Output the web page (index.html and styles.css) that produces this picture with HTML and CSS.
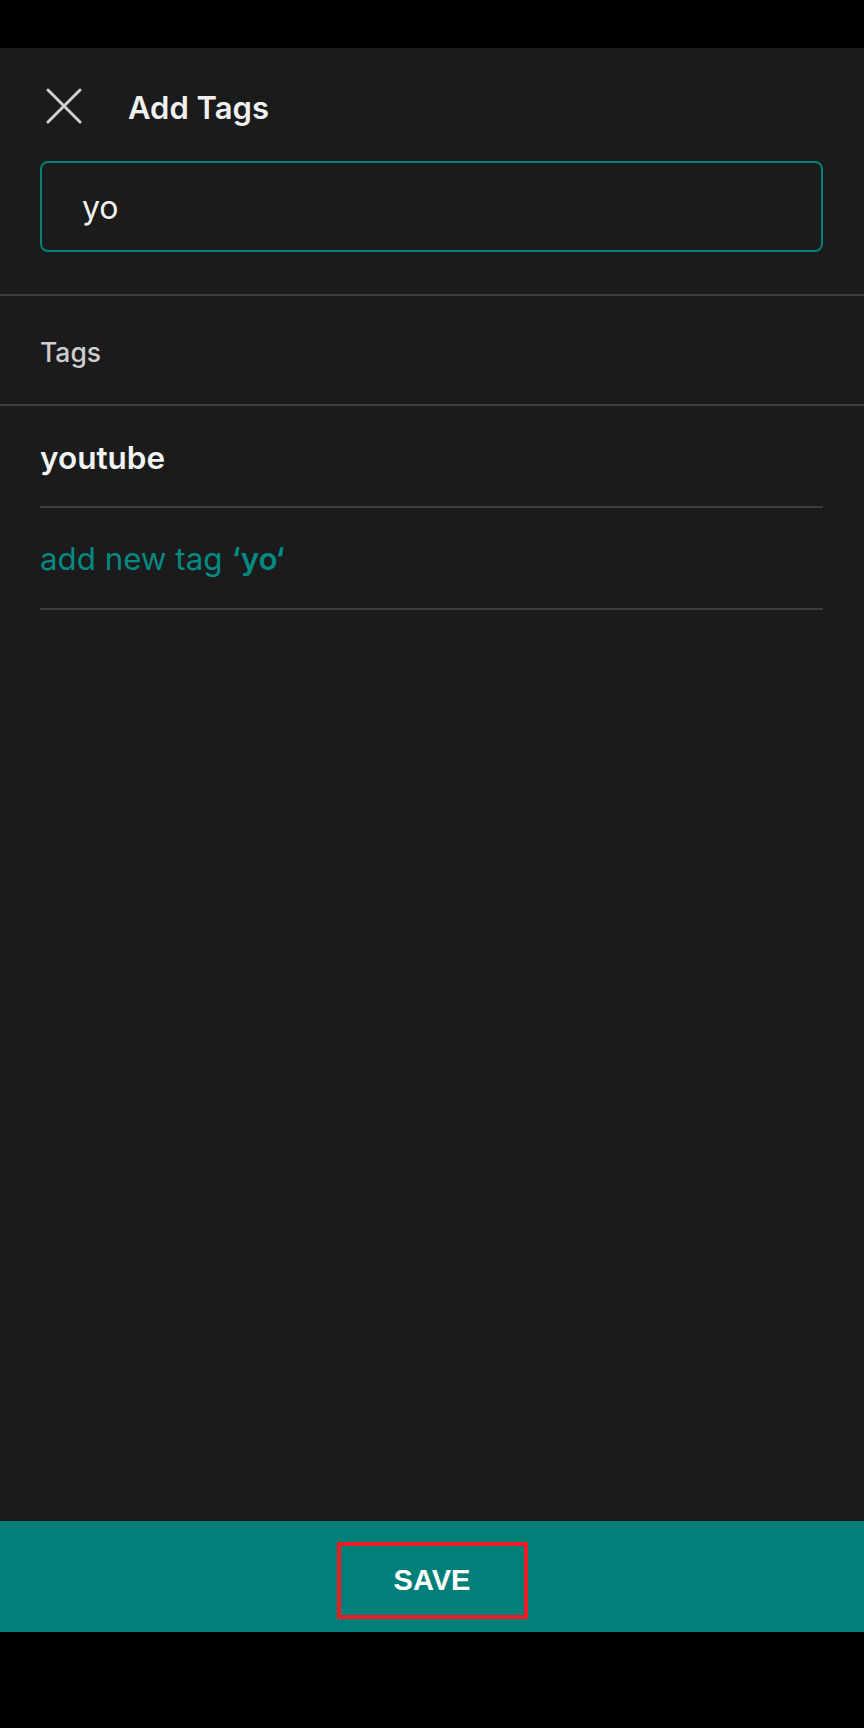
FILE: index.html
```html
<!DOCTYPE html>
<html lang="en">
<head>
<meta charset="utf-8">
<title>Add Tags</title>
<link rel="stylesheet" href="styles.css">
</head>
<body>
<div class="screen">
  <div class="status"></div>
  <main class="main">
    <header class="header">
      <svg class="close" viewBox="0 0 36 36" width="36" height="36" aria-hidden="true">
        <path d="M2 2 L34 34 M34 2 L2 34" stroke="#cfcfcf" stroke-width="3" stroke-linecap="round" fill="none"/>
      </svg>
      <h1 class="title">Add Tags</h1>
    </header>
    <div class="input">yo</div>
    <div class="section-label">Tags</div>
    <ul class="list">
      <li class="row row-tag">youtube</li>
      <li class="row row-add">add new tag <b>‘yo‘</b></li>
    </ul>
  </main>
  <footer class="footer">
    <div class="save">SAVE</div>
  </footer>
  <div class="nav"></div>
</div>
</body>
</html>
```
FILE: styles.css
```css
* { box-sizing: border-box; }
html, body { margin: 0; padding: 0; background: #000; }
body { font-family: "Inter", "Liberation Sans", sans-serif; color: #f2f2f2; }
.screen { width: 864px; height: 1728px; display: flex; flex-direction: column; }
.status { height: 48px; background: #000; flex: none; }
.main { flex: 1; background: #1b1b1b; display: flex; flex-direction: column; }
.header { height: 113px; display: flex; align-items: center; padding-left: 46px; padding-top: 2px; }
.close { flex: none; display: block; }
.title { margin: 4px 0 0 46px; font-size: 31px; font-weight: 600; color: #f0f0f0; letter-spacing: 0; }
.input { margin: 0 41px 0 40px; height: 91px; border: 2px solid #03807a; border-radius: 8px; display: flex; align-items: center; padding-left: 40px; padding-top: 2px; font-size: 32px; color: #f0f0f0; }
.section-label { margin-top: 42px; height: 112px; border-top: 2px solid #3d3d3d; border-bottom: 2px solid #3d3d3d; display: flex; align-items: center; padding-left: 40px; padding-top: 4px; font-size: 26.5px; font-weight: 500; color: #cdcdcd; }
.list { list-style: none; margin: 0; padding: 0 41px 0 40px; }
.row { height: 102px; border-bottom: 2px solid #3d3d3d; display: flex; align-items: center; font-size: 31.5px; padding-top: 2px; }
.row-tag { font-weight: 600; color: #f2f2f2; }
.row-add { color: #048a82; font-weight: 400; font-size: 31.3px; }
.row-add b { font-weight: 600; margin-left: 9px; }
.footer { height: 111px; flex: none; background: #027f78; display: flex; align-items: center; justify-content: center; padding-top: 7px; }
.save { width: 191px; height: 77px; border: 4px solid #ee1c25; display: flex; align-items: center; justify-content: center; font-size: 29px; font-weight: 700; color: #ffffff; font-family: "Liberation Sans", "Inter", sans-serif; }
.nav { height: 96px; flex: none; background: #000; }
```
